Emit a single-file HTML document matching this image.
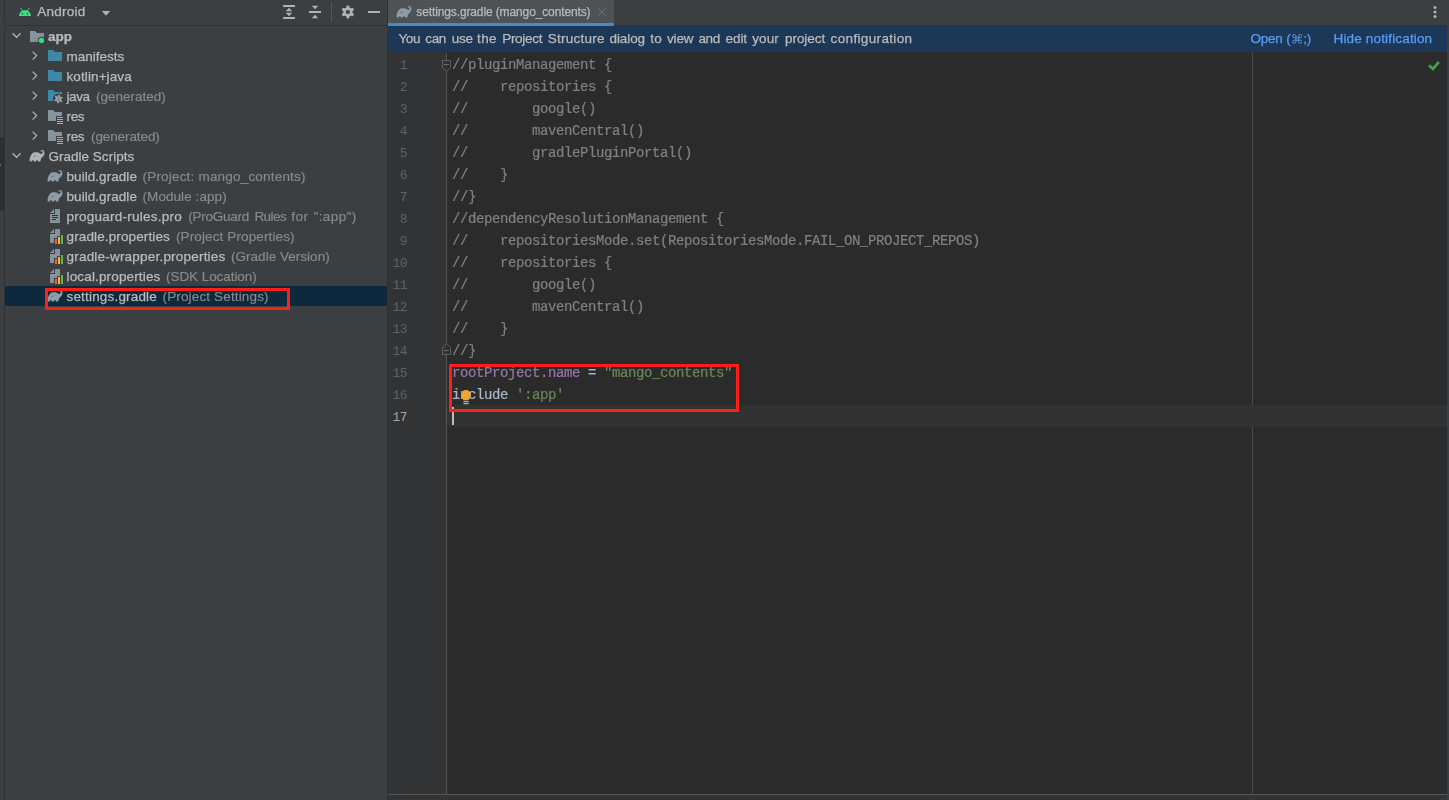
<!DOCTYPE html>
<html><head><meta charset="utf-8"><title>settings.gradle</title>
<style>
*{margin:0;padding:0;box-sizing:border-box}
html,body{width:1449px;height:800px;overflow:hidden;background:#3c3f41;font-family:"Liberation Sans",sans-serif}
#root{position:relative;width:1449px;height:800px;overflow:hidden;background:#3c3f41;will-change:transform}
#root>div,#root>svg,#root>span{position:absolute}
svg{display:block}
.row{left:5px;width:382px;height:20px;font-size:13.5px;line-height:20px;color:#bbbbbb;white-space:pre}
.row svg{position:absolute;top:2px}
.t{position:absolute;top:1px;white-space:pre;-webkit-text-stroke:0.25px currentColor}
.g{color:#8a8a8a;-webkit-text-stroke:0.15px #8a8a8a}
.b{font-weight:bold}
.sel{background:#0d293e}
.ln{left:388px;width:19px;text-align:right;font-family:"Liberation Mono",monospace;font-size:13px;letter-spacing:-0.6px;line-height:22px;color:#606366;height:22px;white-space:pre}
.cl{left:452px;font-family:"Liberation Mono",monospace;font-size:14px;letter-spacing:-0.4014px;line-height:22px;height:22px;white-space:pre;color:#a9b7c6;-webkit-text-stroke:0.2px currentColor}
.c{color:#808080}.p{color:#9876aa}.s{color:#6a8759}.n{color:#a9b7c6}
.redbox{border:3px solid #fc1f1a}
</style></head><body><div id="root">

<div style="left:0;top:137px;width:4px;height:74px;background:#2d2f30"></div>
<div style="left:0;top:164px;width:1px;height:2px;background:#6a6c6e"></div>
<div style="left:0;top:22px;width:1px;height:1px;background:#55585a"></div>
<div style="left:4px;top:0;width:1px;height:800px;background:#323232"></div>
<div style="left:5px;top:25px;width:382px;height:1px;background:#323232"></div>
<svg style="left:17px;top:4px" width="16" height="16" viewBox="0 0 16 16"><path d="M2 12A6 6 0 0 1 14 12Z" fill="#3ddc84"/><path d="M3.9 4.2L5.6 7M12.1 4.2L10.4 7" stroke="#3ddc84" stroke-width="0.9" stroke-linecap="round"/><circle cx="5.5" cy="9.7" r="0.7" fill="#3c3f41"/><circle cx="10.5" cy="9.7" r="0.7" fill="#3c3f41"/></svg>
<div style="left:0;top:1px;height:20px;line-height:20px;font-size:13.5px;color:#bbbbbb;width:200px"><span class="t" style="left:37.20px;letter-spacing:0.236px;">Android</span></div>
<svg style="left:98px;top:4px" width="16" height="16" viewBox="0 0 16 16"><path d="M3.8 7H12.2L8 11.8Z" fill="#afb1b3"/></svg>
<svg style="left:281px;top:4px" width="16" height="16" viewBox="0 0 16 16"><rect x="2" y="1" width="12" height="2" fill="#afb1b3"/><rect x="2" y="13" width="12" height="2" fill="#afb1b3"/><path d="M4.8 7.2H11.2L8 3.8ZM4.8 8.8H11.2L8 12.2Z" fill="#afb1b3"/></svg>
<svg style="left:307px;top:4px" width="16" height="16" viewBox="0 0 16 16"><rect x="2" y="7" width="12" height="2" fill="#afb1b3"/><path d="M4.8 1.8H11.2L8 5.2ZM4.8 14.2H11.2L8 10.8Z" fill="#afb1b3"/></svg>
<div style="left:331px;top:2px;width:1px;height:20px;background:#555759"></div>
<svg style="left:340px;top:4px" width="16" height="16" viewBox="0 0 16 16"><circle cx="7.9" cy="8" r="4.5" fill="#afb1b3"/><rect x="6.3" y="1.6" width="3.2" height="5" rx="1.1" fill="#afb1b3" transform="rotate(0 7.9 8)"/><rect x="6.3" y="1.6" width="3.2" height="5" rx="1.1" fill="#afb1b3" transform="rotate(60 7.9 8)"/><rect x="6.3" y="1.6" width="3.2" height="5" rx="1.1" fill="#afb1b3" transform="rotate(120 7.9 8)"/><rect x="6.3" y="1.6" width="3.2" height="5" rx="1.1" fill="#afb1b3" transform="rotate(180 7.9 8)"/><rect x="6.3" y="1.6" width="3.2" height="5" rx="1.1" fill="#afb1b3" transform="rotate(240 7.9 8)"/><rect x="6.3" y="1.6" width="3.2" height="5" rx="1.1" fill="#afb1b3" transform="rotate(300 7.9 8)"/><circle cx="7.9" cy="8" r="2.1" fill="#3c3f41"/></svg>
<div style="left:368px;top:11px;width:12px;height:2px;background:#afb1b3"></div>
<div class="row" style="top:26px">
<svg style="left:4px" width="16" height="16" viewBox="0 0 16 16"><path d="M3.6 5.3L7.6 9.3L11.6 5.3" fill="none" stroke="#afb1b3" stroke-width="1.3"/></svg>
<svg style="left:24px" width="16" height="16" viewBox="0 0 16 16"><path d="M1 14H15V5H8.02L6.016 3H1Z" fill="#87939a"/><circle cx="12.4" cy="12.5" r="3.7" fill="#3c3f41"/><circle cx="12.4" cy="12.5" r="2.7" fill="#3ddc84"/></svg>
<span class="t b" style="left:43.00px;letter-spacing:-0.005px;">app</span>
</div>
<div class="row" style="top:46px">
<svg style="left:22px" width="16" height="16" viewBox="0 0 16 16"><path d="M5.6 3.6L9.6 7.6L5.6 11.6" fill="none" stroke="#afb1b3" stroke-width="1.3"/></svg>
<svg style="left:42px" width="16" height="16" viewBox="0 0 16 16"><path d="M1 13H15V4H8.02L6.016 2H1Z" fill="#3e88a6"/></svg>
<span class="t" style="left:61.50px;letter-spacing:-0.009px;">manifests</span>
</div>
<div class="row" style="top:66px">
<svg style="left:22px" width="16" height="16" viewBox="0 0 16 16"><path d="M5.6 3.6L9.6 7.6L5.6 11.6" fill="none" stroke="#afb1b3" stroke-width="1.3"/></svg>
<svg style="left:42px" width="16" height="16" viewBox="0 0 16 16"><path d="M1 13H15V4H8.02L6.016 2H1Z" fill="#3e88a6"/></svg>
<span class="t" style="left:61.50px;letter-spacing:0.103px;">kotlin+java</span>
</div>
<div class="row" style="top:86px">
<svg style="left:22px" width="16" height="16" viewBox="0 0 16 16"><path d="M5.6 3.6L9.6 7.6L5.6 11.6" fill="none" stroke="#afb1b3" stroke-width="1.3"/></svg>
<svg style="left:42px" width="16" height="16" viewBox="0 0 16 16"><path d="M1 13H15V4H8.02L6.016 2H1Z" fill="#3e88a6"/><circle cx="11.5" cy="11" r="5.5" fill="#3c3f41"/><path transform="rotate(0 11.5 11)" d="M11.6 10.3C10.6 9.2 10.8 7.6 12.3 6.8C13.3 8 12.9 9.5 11.6 10.3Z" fill="#a3adb5" stroke="#a3adb5" stroke-width="0.5" stroke-linejoin="round"/><path transform="rotate(60 11.5 11)" d="M11.6 10.3C10.6 9.2 10.8 7.6 12.3 6.8C13.3 8 12.9 9.5 11.6 10.3Z" fill="#a3adb5" stroke="#a3adb5" stroke-width="0.5" stroke-linejoin="round"/><path transform="rotate(120 11.5 11)" d="M11.6 10.3C10.6 9.2 10.8 7.6 12.3 6.8C13.3 8 12.9 9.5 11.6 10.3Z" fill="#a3adb5" stroke="#a3adb5" stroke-width="0.5" stroke-linejoin="round"/><path transform="rotate(180 11.5 11)" d="M11.6 10.3C10.6 9.2 10.8 7.6 12.3 6.8C13.3 8 12.9 9.5 11.6 10.3Z" fill="#a3adb5" stroke="#a3adb5" stroke-width="0.5" stroke-linejoin="round"/><path transform="rotate(240 11.5 11)" d="M11.6 10.3C10.6 9.2 10.8 7.6 12.3 6.8C13.3 8 12.9 9.5 11.6 10.3Z" fill="#a3adb5" stroke="#a3adb5" stroke-width="0.5" stroke-linejoin="round"/><path transform="rotate(300 11.5 11)" d="M11.6 10.3C10.6 9.2 10.8 7.6 12.3 6.8C13.3 8 12.9 9.5 11.6 10.3Z" fill="#a3adb5" stroke="#a3adb5" stroke-width="0.5" stroke-linejoin="round"/></svg>
<span class="t" style="left:61.50px;letter-spacing:-0.391px;">java</span>
<span class="t g" style="left:91.00px;letter-spacing:-0.009px;">(generated)</span>
</div>
<div class="row" style="top:106px">
<svg style="left:22px" width="16" height="16" viewBox="0 0 16 16"><path d="M5.6 3.6L9.6 7.6L5.6 11.6" fill="none" stroke="#afb1b3" stroke-width="1.3"/></svg>
<svg style="left:42px" width="16" height="16" viewBox="0 0 16 16"><path d="M1 13H9V8H15V4H8.02L6.016 2H1Z" fill="#87939a"/><rect x="10" y="9" width="6" height="1" fill="#e8a33d"/><rect x="10" y="11" width="6" height="1" fill="#e8a33d"/><rect x="10" y="13" width="6" height="1" fill="#e8a33d"/><rect x="10" y="15" width="6" height="1" fill="#e8a33d"/></svg>
<span class="t" style="left:61.50px;letter-spacing:-0.355px;">res</span>
</div>
<div class="row" style="top:126px">
<svg style="left:22px" width="16" height="16" viewBox="0 0 16 16"><path d="M5.6 3.6L9.6 7.6L5.6 11.6" fill="none" stroke="#afb1b3" stroke-width="1.3"/></svg>
<svg style="left:42px" width="16" height="16" viewBox="0 0 16 16"><path d="M1 13H9V8H15V4H8.02L6.016 2H1Z" fill="#87939a"/><rect x="10" y="9" width="6" height="1" fill="#e8a33d"/><rect x="10" y="11" width="6" height="1" fill="#e8a33d"/><rect x="10" y="13" width="6" height="1" fill="#e8a33d"/><rect x="10" y="15" width="6" height="1" fill="#e8a33d"/></svg>
<span class="t" style="left:61.50px;letter-spacing:-0.355px;">res</span>
<span class="t g" style="left:86.00px;letter-spacing:-0.100px;">(generated)</span>
</div>
<div class="row" style="top:146px">
<svg style="left:4px" width="16" height="16" viewBox="0 0 16 16"><path d="M3.6 5.3L7.6 9.3L11.6 5.3" fill="none" stroke="#afb1b3" stroke-width="1.3"/></svg>
<svg style="left:24px" width="16" height="16" viewBox="0 0 16 16"><path d="M0.7 13.6C0.3 11 1 8.6 2.2 7C3 5.5 4 4.3 6 4.2C8 4.1 9.6 4.3 10.8 5.2C11.5 5.8 12.2 6.1 12.8 5.7C13.6 5.1 14.1 4.3 13.9 3.6C13.7 3 13 3 12.4 3.7L11.3 3C12.2 1.9 13.8 1.7 14.8 2.8C15.8 4 15.6 5.6 15 7C14.4 8.4 13.5 9.2 12.6 9.8C11.9 10.5 11.6 12 11.4 13.6L9 13.6C9 12.7 8.6 12.3 8 12.3C7.4 12.3 7 12.7 7 13.6L4.8 13.6C4.8 12.7 4.4 12.3 3.8 12.3C3.2 12.3 2.8 12.7 2.8 13.6Z" fill="#afb1b3"/><path d="M4.2 8.2C5 8.9 6.3 8.6 6.9 7.6" fill="none" stroke="#3c3f41" stroke-opacity=".55" stroke-width=".7"/></svg>
<span class="t" style="left:43.50px;letter-spacing:0.012px;">Gradle Scripts</span>
</div>
<div class="row" style="top:166px">
<svg style="left:42px" width="16" height="16" viewBox="0 0 16 16"><path d="M0.7 13.6C0.3 11 1 8.6 2.2 7C3 5.5 4 4.3 6 4.2C8 4.1 9.6 4.3 10.8 5.2C11.5 5.8 12.2 6.1 12.8 5.7C13.6 5.1 14.1 4.3 13.9 3.6C13.7 3 13 3 12.4 3.7L11.3 3C12.2 1.9 13.8 1.7 14.8 2.8C15.8 4 15.6 5.6 15 7C14.4 8.4 13.5 9.2 12.6 9.8C11.9 10.5 11.6 12 11.4 13.6L9 13.6C9 12.7 8.6 12.3 8 12.3C7.4 12.3 7 12.7 7 13.6L4.8 13.6C4.8 12.7 4.4 12.3 3.8 12.3C3.2 12.3 2.8 12.7 2.8 13.6Z" fill="#8d9ca6"/><path d="M4.2 8.2C5 8.9 6.3 8.6 6.9 7.6" fill="none" stroke="#3c3f41" stroke-opacity=".55" stroke-width=".7"/></svg>
<span class="t" style="left:61.50px;letter-spacing:0.057px;">build.gradle</span>
<span class="t g" style="left:137.50px;letter-spacing:0.194px;">(Project: mango_contents)</span>
</div>
<div class="row" style="top:186px">
<svg style="left:42px" width="16" height="16" viewBox="0 0 16 16"><path d="M0.7 13.6C0.3 11 1 8.6 2.2 7C3 5.5 4 4.3 6 4.2C8 4.1 9.6 4.3 10.8 5.2C11.5 5.8 12.2 6.1 12.8 5.7C13.6 5.1 14.1 4.3 13.9 3.6C13.7 3 13 3 12.4 3.7L11.3 3C12.2 1.9 13.8 1.7 14.8 2.8C15.8 4 15.6 5.6 15 7C14.4 8.4 13.5 9.2 12.6 9.8C11.9 10.5 11.6 12 11.4 13.6L9 13.6C9 12.7 8.6 12.3 8 12.3C7.4 12.3 7 12.7 7 13.6L4.8 13.6C4.8 12.7 4.4 12.3 3.8 12.3C3.2 12.3 2.8 12.7 2.8 13.6Z" fill="#8d9ca6"/><path d="M4.2 8.2C5 8.9 6.3 8.6 6.9 7.6" fill="none" stroke="#3c3f41" stroke-opacity=".55" stroke-width=".7"/></svg>
<span class="t" style="left:61.50px;letter-spacing:0.057px;">build.gradle</span>
<span class="t g" style="left:137.50px;letter-spacing:0.069px;">(Module :app)</span>
</div>
<div class="row" style="top:206px">
<svg style="left:42px" width="16" height="16" viewBox="0 0 16 16"><path d="M7 1L3 5H7Z" fill="#87939a"/><path d="M8 1V6H3V15H13V1Z" fill="#87939a"/><rect x="5" y="7" width="6" height="1" fill="#2f3234"/><rect x="5" y="9" width="6" height="1" fill="#2f3234"/><rect x="5" y="11" width="4" height="1" fill="#2f3234"/></svg>
<span class="t" style="left:61.50px;letter-spacing:0.247px;">proguard-rules.pro</span>
<span class="t g" style="left:183.30px;letter-spacing:-0.259px;">(ProGuard</span>
<span class="t g" style="left:249.40px;letter-spacing:-0.523px;">Rules</span>
<span class="t g" style="left:286.20px;letter-spacing:0.578px;">for</span>
<span class="t g" style="left:308.50px;letter-spacing:0.406px;">":app")</span>
</div>
<div class="row" style="top:226px">
<svg style="left:42px" width="16" height="16" viewBox="0 0 16 16"><path d="M7 1L3 5H7Z" fill="#87939a"/><path d="M8 1H13V8H10V10H7V15H3V6H8Z" fill="#87939a"/><rect x="8" y="11" width="2" height="5" fill="#f26522"/><rect x="11" y="9" width="2" height="7" fill="#f9b43a"/><rect x="14" y="7" width="2" height="9" fill="#62b543"/></svg>
<span class="t" style="left:61.50px;letter-spacing:0.129px;">gradle.properties</span>
<span class="t g" style="left:171.00px;letter-spacing:0.120px;">(Project Properties)</span>
</div>
<div class="row" style="top:246px">
<svg style="left:42px" width="16" height="16" viewBox="0 0 16 16"><path d="M7 1L3 5H7Z" fill="#87939a"/><path d="M8 1H13V8H10V10H7V15H3V6H8Z" fill="#87939a"/><rect x="8" y="11" width="2" height="5" fill="#f26522"/><rect x="11" y="9" width="2" height="7" fill="#f9b43a"/><rect x="14" y="7" width="2" height="9" fill="#62b543"/></svg>
<span class="t" style="left:61.50px;letter-spacing:0.206px;">gradle-wrapper.properties</span>
<span class="t g" style="left:226.00px;letter-spacing:0.025px;">(Gradle Version)</span>
</div>
<div class="row" style="top:266px">
<svg style="left:42px" width="16" height="16" viewBox="0 0 16 16"><path d="M7 1L3 5H7Z" fill="#87939a"/><path d="M8 1H13V8H10V10H7V15H3V6H8Z" fill="#87939a"/><rect x="8" y="11" width="2" height="5" fill="#f26522"/><rect x="11" y="9" width="2" height="7" fill="#f9b43a"/><rect x="14" y="7" width="2" height="9" fill="#62b543"/></svg>
<span class="t" style="left:61.50px;letter-spacing:0.153px;">local.properties</span>
<span class="t g" style="left:161.00px;letter-spacing:-0.060px;">(SDK Location)</span>
</div>
<div class="row sel" style="top:286px">
<svg style="left:42px" width="16" height="16" viewBox="0 0 16 16"><path d="M0.7 13.6C0.3 11 1 8.6 2.2 7C3 5.5 4 4.3 6 4.2C8 4.1 9.6 4.3 10.8 5.2C11.5 5.8 12.2 6.1 12.8 5.7C13.6 5.1 14.1 4.3 13.9 3.6C13.7 3 13 3 12.4 3.7L11.3 3C12.2 1.9 13.8 1.7 14.8 2.8C15.8 4 15.6 5.6 15 7C14.4 8.4 13.5 9.2 12.6 9.8C11.9 10.5 11.6 12 11.4 13.6L9 13.6C9 12.7 8.6 12.3 8 12.3C7.4 12.3 7 12.7 7 13.6L4.8 13.6C4.8 12.7 4.4 12.3 3.8 12.3C3.2 12.3 2.8 12.7 2.8 13.6Z" fill="#8d9ca6"/><path d="M4.2 8.2C5 8.9 6.3 8.6 6.9 7.6" fill="none" stroke="#3c3f41" stroke-opacity=".55" stroke-width=".7"/></svg>
<span class="t" style="left:61.50px;letter-spacing:0.179px;">settings.gradle</span>
<span class="t g" style="left:157.50px;letter-spacing:0.147px;">(Project Settings)</span>
</div>
<div style="left:387px;top:0;width:1px;height:800px;background:#323232"></div>
<div style="left:388px;top:25px;width:1061px;height:1px;background:#323232"></div>
<div style="left:388px;top:0;width:226px;height:26px;background:#4e5254"></div>
<div style="left:388px;top:23px;width:226px;height:3px;background:#4a88c7"></div>
<svg style="left:396px;top:4px" width="16" height="16" viewBox="0 0 16 16"><path d="M0.7 13.6C0.3 11 1 8.6 2.2 7C3 5.5 4 4.3 6 4.2C8 4.1 9.6 4.3 10.8 5.2C11.5 5.8 12.2 6.1 12.8 5.7C13.6 5.1 14.1 4.3 13.9 3.6C13.7 3 13 3 12.4 3.7L11.3 3C12.2 1.9 13.8 1.7 14.8 2.8C15.8 4 15.6 5.6 15 7C14.4 8.4 13.5 9.2 12.6 9.8C11.9 10.5 11.6 12 11.4 13.6L9 13.6C9 12.7 8.6 12.3 8 12.3C7.4 12.3 7 12.7 7 13.6L4.8 13.6C4.8 12.7 4.4 12.3 3.8 12.3C3.2 12.3 2.8 12.7 2.8 13.6Z" fill="#8d9ca6"/><path d="M4.2 8.2C5 8.9 6.3 8.6 6.9 7.6" fill="none" stroke="#3c3f41" stroke-opacity=".55" stroke-width=".7"/></svg>
<div style="left:0;top:1px;height:20px;line-height:20px;font-size:12px;color:#bbbbbb;width:700px"><span class="t" style="left:416.30px;letter-spacing:-0.122px;">settings.gradle (mango_contents)</span></div>
<svg style="left:594px;top:4px" width="16" height="16" viewBox="0 0 16 16"><path d="M4.3 4.3L11.7 11.7M11.7 4.3L4.3 11.7" stroke="#6d7a83" stroke-width="0.9"/></svg>
<svg style="left:1427px;top:4px" width="16" height="16" viewBox="0 0 16 16"><circle cx="8" cy="3.5" r="1.5" fill="#afb1b3"/><circle cx="8" cy="8" r="1.5" fill="#afb1b3"/><circle cx="8" cy="12.5" r="1.5" fill="#afb1b3"/></svg>
<div style="left:388px;top:26px;width:1061px;height:26px;background:#1d3857"></div>
<div style="left:0;top:28px;height:20px;line-height:20px;font-size:13.5px;color:#bbbbbb;width:1449px"><span class="t" style="left:398.40px;letter-spacing:-0.327px;">You</span><span class="t" style="left:425.30px;letter-spacing:-0.360px;">can</span><span class="t" style="left:451.70px;letter-spacing:-0.227px;">use</span><span class="t" style="left:477.00px;letter-spacing:0.406px;">the</span><span class="t" style="left:502.20px;letter-spacing:-0.290px;">Project</span><span class="t" style="left:547.70px;letter-spacing:0.258px;">Structure</span><span class="t" style="left:609.50px;letter-spacing:-0.089px;">dialog</span><span class="t" style="left:650.20px;letter-spacing:0.217px;">to</span><span class="t" style="left:667.00px;letter-spacing:-0.179px;">view</span><span class="t" style="left:698.40px;letter-spacing:-0.310px;">and</span><span class="t" style="left:725.50px;letter-spacing:-0.070px;">edit</span><span class="t" style="left:752.20px;letter-spacing:0.109px;">your</span><span class="t" style="left:785.00px;letter-spacing:-0.047px;">project</span><span class="t" style="left:830.60px;letter-spacing:0.345px;">configuration</span><span class="t" style="left:1250.40px;letter-spacing:-0.180px;color:#589df6;">Open (</span><svg style="position:absolute;left:1291.7px;top:6.4px" width="10.6" height="9.8" viewBox="0 0 10 10" preserveAspectRatio="none"><path d="M3.7 3.7V2.1A1.6 1.6 0 1 0 2.1 3.7H7.9A1.6 1.6 0 1 0 6.3 2.1V7.9A1.6 1.6 0 1 0 7.9 6.3H2.1A1.6 1.6 0 1 0 3.7 7.9Z" fill="none" stroke="#589df6" stroke-width="0.9"/></svg><span class="t" style="left:1303.30px;letter-spacing:-0.175px;color:#589df6;">;)</span><span class="t" style="left:1333.50px;letter-spacing:0.161px;color:#589df6;">Hide notification</span></div>
<div style="left:388px;top:52px;width:1061px;height:742px;background:#2b2b2b"></div>
<div style="left:388px;top:52px;width:58px;height:742px;background:#313335"></div>
<div style="left:446px;top:53px;width:1px;height:741px;background:#555555"></div>
<div style="left:1252px;top:52px;width:1px;height:742px;background:#4a4a4a"></div>
<div style="left:447px;top:405px;width:1002px;height:22px;background:#323232"></div>
<div style="left:388px;top:794px;width:1061px;height:1px;background:#555555"></div>
<div style="left:388px;top:795px;width:1061px;height:5px;background:#313335"></div>
<div class="ln" style="top:55px">1</div>
<div class="cl" style="top:54px"><span class="c">//pluginManagement {</span></div>
<div class="ln" style="top:77px">2</div>
<div class="cl" style="top:76px"><span class="c">//    repositories {</span></div>
<div class="ln" style="top:99px">3</div>
<div class="cl" style="top:98px"><span class="c">//        google()</span></div>
<div class="ln" style="top:121px">4</div>
<div class="cl" style="top:120px"><span class="c">//        mavenCentral()</span></div>
<div class="ln" style="top:143px">5</div>
<div class="cl" style="top:142px"><span class="c">//        gradlePluginPortal()</span></div>
<div class="ln" style="top:165px">6</div>
<div class="cl" style="top:164px"><span class="c">//    }</span></div>
<div class="ln" style="top:187px">7</div>
<div class="cl" style="top:186px"><span class="c">//}</span></div>
<div class="ln" style="top:209px">8</div>
<div class="cl" style="top:208px"><span class="c">//dependencyResolutionManagement {</span></div>
<div class="ln" style="top:231px">9</div>
<div class="cl" style="top:230px"><span class="c">//    repositoriesMode.set(RepositoriesMode.FAIL_ON_PROJECT_REPOS)</span></div>
<div class="ln" style="top:253px">10</div>
<div class="cl" style="top:252px"><span class="c">//    repositories {</span></div>
<div class="ln" style="top:275px">11</div>
<div class="cl" style="top:274px"><span class="c">//        google()</span></div>
<div class="ln" style="top:297px">12</div>
<div class="cl" style="top:296px"><span class="c">//        mavenCentral()</span></div>
<div class="ln" style="top:319px">13</div>
<div class="cl" style="top:318px"><span class="c">//    }</span></div>
<div class="ln" style="top:341px">14</div>
<div class="cl" style="top:340px"><span class="c">//}</span></div>
<div class="ln" style="top:363px">15</div>
<div class="cl" style="top:362px"><span class="p">rootProject.name</span><span class="n"> = </span><span class="s">"mango_contents"</span></div>
<div class="ln" style="top:385px">16</div>
<div class="cl" style="top:384px"><span class="n">include </span><span class="s">':app'</span></div>
<div class="ln" style="top:407px;color:#a4a3a3">17</div>
<svg style="left:442px;top:60px" width="9" height="12" viewBox="0 0 9 12"><path d="M0.5 0.5H8.5V7.5L4.5 11.5L0.5 7.5Z" fill="#313335"/><path d="M0.5 0.5H8.5V7.5L4.5 11.5L0.5 7.5Z" fill="#2b2b2b" clip-path="inset(0 0 0 5px)" style="clip-path:inset(0 0 0 5px)"/><path d="M0.5 0.5H8.5V7.5L4.5 11.5L0.5 7.5Z" fill="none" stroke="#5e5e5e"/><path d="M2 4.5H7" stroke="#6c6c6c"/></svg>
<svg style="left:442px;top:343px" width="9" height="12" viewBox="0 0 9 12"><path d="M0.5 11.5H8.5V4.5L4.5 0.5L0.5 4.5Z" fill="#313335"/><path d="M0.5 11.5H8.5V4.5L4.5 0.5L0.5 4.5Z" fill="#2b2b2b" clip-path="inset(0 0 0 5px)" style="clip-path:inset(0 0 0 5px)"/><path d="M0.5 11.5H8.5V4.5L4.5 0.5L0.5 4.5Z" fill="none" stroke="#5e5e5e"/><path d="M2 7.5H7" stroke="#6c6c6c"/></svg>
<svg style="left:1427px;top:58px" width="14" height="14" viewBox="0 0 14 14"><path d="M1.9 7.2L5.9 10.9L11.9 3.9" fill="none" stroke="#499c54" stroke-width="2.8"/></svg>
<div style="left:452px;top:407px;width:2px;height:18px;background:#bbbbbb"></div>
<svg style="left:458px;top:387px" width="16" height="18" viewBox="0 0 16 18"><circle cx="8" cy="8" r="5" fill="#f0a732"/><path d="M4 10.8L5.6 13.2H10.4L12 10.8Z" fill="#f0a732"/><rect x="5.4" y="14.2" width="5.4" height="1" fill="#c9ccd0"/><rect x="5.4" y="16.2" width="5.4" height="1" fill="#c9ccd0"/></svg>
<div style="left:1447px;top:0;width:2px;height:800px;background:#3c3f41"></div>
<div class="redbox" style="left:45px;top:288px;width:245px;height:22px"></div>
<div class="redbox" style="left:449px;top:364px;width:290px;height:48px"></div>
</div></body></html>
